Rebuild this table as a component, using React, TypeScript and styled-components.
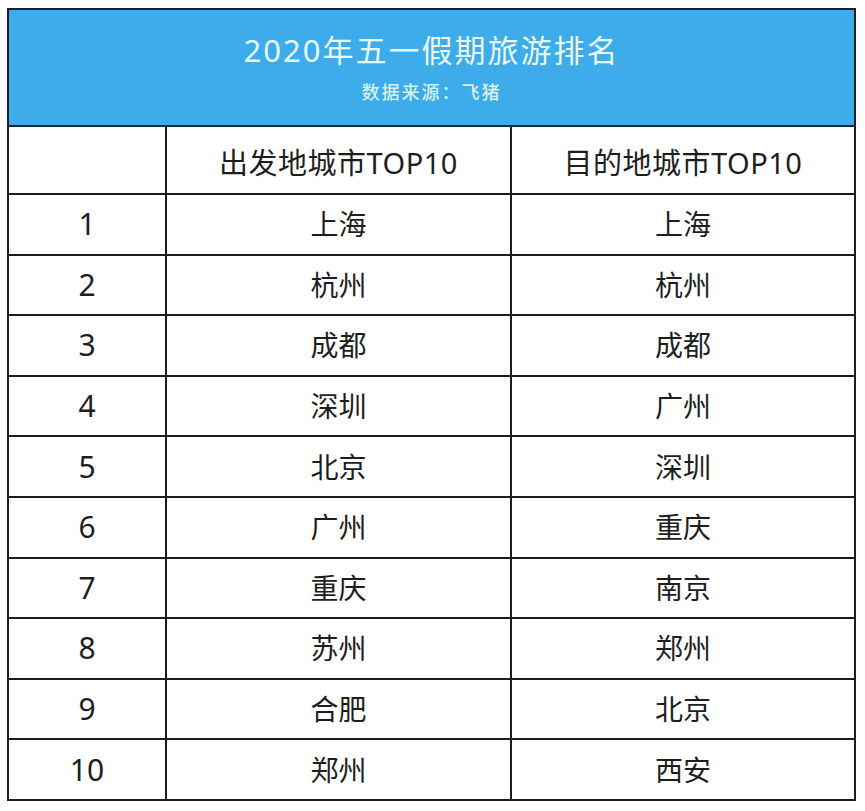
import * as React from "react";
import styled, { createGlobalStyle } from "styled-components";

const GlobalStyle = createGlobalStyle`
  html, body {
    margin: 0;
    padding: 0;
    background: #ffffff;
  }
  body {
    font-family: "Noto Sans", "Noto Sans CJK SC", sans-serif;
    color: #1e1e1e;
  }
`;

const Page = styled.div`
  padding: 8px 0 0 7px;
`;

const Frame = styled.div`
  width: 849px;
  height: 793px;
  box-sizing: border-box;
  border: 2px solid #1c1f24;
  display: flex;
  flex-direction: column;
`;

const Banner = styled.div`
  height: 117px;
  box-sizing: border-box;
  flex: none;
  background: #3eabea;
  border-bottom: 2px solid #1d2a36;
  display: flex;
  flex-direction: column;
  align-items: center;
  padding-top: 20px;
`;

const Title = styled.div`
  font-size: 31px;
  letter-spacing: 2px;
  line-height: 40px;
  color: #e6faf3;
  font-weight: 400;
`;

const Subtitle = styled.div`
  margin-top: 10px;
  font-size: 18px;
  letter-spacing: 2px;
  line-height: 24px;
  color: #d6f2ec;
  font-weight: 500;
`;

const Row = styled.div<{ $head?: boolean; $last?: boolean }>`
  display: grid;
  grid-template-columns: 158px 345px 1fr;
  box-sizing: border-box;
  flex: ${({ $head }) => ($head ? "0 0 68px" : "1 1 0")};
  border-bottom: ${({ $last }) => ($last ? "none" : "2px solid #1c1c1c")};
`;

const Cell = styled.div<{ $num?: boolean; $end?: boolean }>`
  display: flex;
  align-items: center;
  justify-content: center;
  border-right: ${({ $end }) => ($end ? "none" : "2px solid #1c1c1c")};
  font-size: ${({ $num }) => ($num ? "30px" : "28px")};
  line-height: 1;
`;

const HeadCell = styled(Cell)`
  font-size: 29px;
  padding-top: 4px;
  letter-spacing: 0.5px;
`;

const rows: [string, string][] = [
  ["上海", "上海"],
  ["杭州", "杭州"],
  ["成都", "成都"],
  ["深圳", "广州"],
  ["北京", "深圳"],
  ["广州", "重庆"],
  ["重庆", "南京"],
  ["苏州", "郑州"],
  ["合肥", "北京"],
  ["郑州", "西安"],
];

export default function App() {
  return (
    <>
      <GlobalStyle />
      <Page>
        <Frame>
          <Banner>
            <Title>2020年五一假期旅游排名</Title>
            <Subtitle>数据来源：飞猪</Subtitle>
          </Banner>
          <Row $head>
            <HeadCell />
            <HeadCell>出发地城市TOP10</HeadCell>
            <HeadCell $end>目的地城市TOP10</HeadCell>
          </Row>
          {rows.map(([from, to], i) => (
            <Row key={i} $last={i === rows.length - 1}>
              <Cell $num>{i + 1}</Cell>
              <Cell>{from}</Cell>
              <Cell $end>{to}</Cell>
            </Row>
          ))}
        </Frame>
      </Page>
    </>
  );
}
